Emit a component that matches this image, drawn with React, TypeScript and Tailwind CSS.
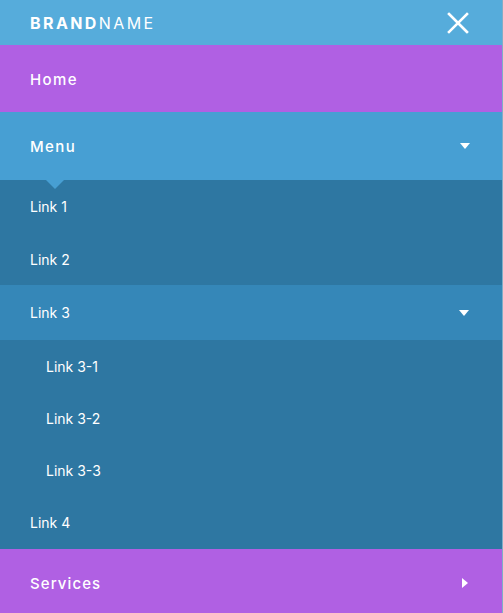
import React from 'react'

const font = { fontFamily: 'Inter, "Open Sans", "Liberation Sans", sans-serif' }

function CaretDown() {
  return (
    <svg width="10" height="6" viewBox="0 0 10 6" className="fill-white">
      <path d="M0 0h10L5 6z" />
    </svg>
  )
}

function CaretRight() {
  return (
    <svg width="6" height="10" viewBox="0 0 6 10" className="fill-white">
      <path d="M0 0v10l6-5z" />
    </svg>
  )
}

function SubLink({
  label,
  className,
  indent,
  children,
}: {
  label: string
  className: string
  indent?: boolean
  children?: React.ReactNode
}) {
  return (
    <a
      href="#"
      className={`flex items-center justify-between pr-[33px] text-[14px] text-white ${indent ? 'pl-[46px]' : 'pl-[30px]'} ${className}`}
    >
      <span>{label}</span>
      {children}
    </a>
  )
}

export default function App() {
  return (
    <div className="h-[613px] w-[503px] overflow-hidden border-r border-white/40 bg-[#2e77a2]" style={font}>
      <header className="flex h-[45px] items-center justify-between bg-[#56acdb] pl-[30px] pr-[33px]">
        <span className="text-[16px] tracking-[2.4px] text-white">
          <b className="font-bold">BRAND</b>NAME
        </span>
        <button type="button" className="text-white">
          <svg width="22" height="22" viewBox="0 0 22 22" stroke="currentColor" strokeWidth="2.6" strokeLinecap="square">
            <path d="M2 2l18 18M20 2L2 20" />
          </svg>
        </button>
      </header>

      <nav className="flex flex-col">
        <a href="#" className="flex h-[67px] items-center bg-[#b060e3] pl-[30px] pt-[3px] text-[15px] font-medium tracking-[1.4px] text-white">
          Home
        </a>

        <div className="relative flex h-[68px] items-center justify-between bg-[#479fd3] pl-[30px] pr-[32px] text-[15px] font-medium tracking-[1.4px] text-white">
          <span className="pt-[2px]">Menu</span>
          <CaretDown />
          <span className="absolute left-[46px] top-full h-0 w-0 border-x-[9px] border-t-[9px] border-x-transparent border-t-[#479fd3]" />
        </div>

        <div className="flex flex-col">
          <SubLink label="Link 1" className="h-[53px]" />
          <SubLink label="Link 2" className="h-[52px]" />
          <SubLink label="Link 3" className="h-[55px] bg-[#3587b8]">
            <CaretDown />
          </SubLink>
          <SubLink label="Link 3-1" indent className="h-[52px]" />
          <SubLink label="Link 3-2" indent className="h-[52px]" />
          <SubLink label="Link 3-3" indent className="h-[52px]" />
          <SubLink label="Link 4" className="h-[53px]" />
        </div>

        <a href="#" className="flex h-[68px] items-center justify-between bg-[#b060e3] pl-[30px] pr-[34px] text-[15px] font-medium tracking-[1.1px] text-white">
          <span className="pt-[3px]">Services</span>
          <CaretRight />
        </a>
      </nav>
    </div>
  )
}
